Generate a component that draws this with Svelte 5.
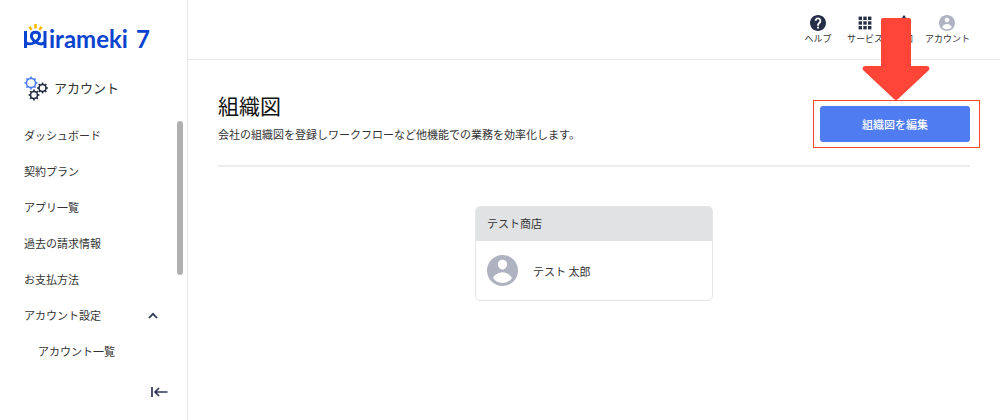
<script>
	const menu = ["ダッシュボード", "契約プラン", "アプリ一覧", "過去の請求情報", "お支払方法"]

	let open = $state(true)

	// teeth around each gear of the section icon
	const gears = [
		{ x: 7, y: 7, r: 4.6, cls: "blue" },
		{ x: 18.5, y: 12, r: 3.5, cls: "navy" },
		{ x: 10, y: 19, r: 3.5, cls: "navy" },
	]
	const angles = [0, 45, 90, 135, 180, 225, 270, 315]
</script>

{#snippet person()}
	<svg viewBox="2 2 20 20" aria-hidden="true">
		<path d="M12 2C6.48 2 2 6.48 2 12s4.48 10 10 10 10-4.48 10-10S17.52 2 12 2zm0 3c1.66 0 3 1.34 3 3s-1.34 3.4-3 3.4S9 9.66 9 8s1.34-3 3-3zm0 15c-2.5 0-4.71-1.1-6-2.98.03-1.99 4-3.88 6-3.88s5.97 1.89 6 3.88C16.71 18.9 14.5 20 12 20z"/>
	</svg>
{/snippet}

<div class="app">
	<aside>
		<a class="logo" href="#top" aria-label="Mirameki 7">
			<svg class="mark" width="25" height="28" viewBox="0 0 25 28" aria-hidden="true">
				<g class="rays">
					<path d="M5.400 4.800L7.600 7.800M11.500 2V6.500M17.600 4.800L15.400 7.800"/>
				</g>
				<g class="strokes">
					<path d="M1.500 9V26M21 9V26"/>
					<path d="M1.500 20.500C4 22.500 8 22 10.500 20.500C14.500 18 16 15.500 15.500 13C14.800 9.400 8.200 9.400 7.500 13C7 15.500 8.500 18 12.500 20.500C15 22 18.500 22.500 21 20.500"/>
				</g>
			</svg>
			<span class="name">irameki</span>
			<span class="seven">7</span>
		</a>

		<div class="section">
			<svg width="25" height="25" viewBox="0 0 25 25" aria-hidden="true">
				{#each gears as g}
					<g class={g.cls} transform="translate({g.x} {g.y})">
						<circle r={g.r}/>
						{#each angles as a}
							<path d="M0 {-g.r}V{-g.r - 1.9}" transform="rotate({a})"/>
						{/each}
					</g>
				{/each}
			</svg>
			<span>アカウント</span>
		</div>

		<div class="scroll">
			<nav>
				{#each menu as item}
					<a href="#menu">{item}</a>
				{/each}
				<button class="group" aria-expanded={open} onclick={() => open = !open}>
					アカウント設定
					<svg class:closed={!open} width="10" height="7" viewBox="0 0 10 7" aria-hidden="true">
						<path d="M1 6L5 1.800L9 6"/>
					</svg>
				</button>
				{#if open}
					<a class="sub" href="#accounts">アカウント一覧</a>
				{/if}
			</nav>
			<div class="thumb"></div>
		</div>

		<button class="collapse" aria-label="メニューを閉じる">
			<svg width="17" height="12" viewBox="0 0 17 12" aria-hidden="true">
				<path d="M1 1V11M16.500 6H4M8 2L4 6L8 10"/>
			</svg>
		</button>
	</aside>

	<div class="page">
		<header>
			<a class="help" href="#help">
				<svg viewBox="2 2 20 20" aria-hidden="true">
					<path d="M12 2C6.480 2 2 6.480 2 12s4.480 10 10 10 10-4.480 10-10S17.520 2 12 2zm1.200 17h-2.400v-2.400h2.400V19zm2.300-7.400l-.9.920C13.700 13.300 13.200 14 13.200 15.300h-2.400v-.6c0-1.100.45-2.100 1.170-2.830l1.240-1.260c.37-.36.59-.86.59-1.410 0-1.100-.8-1.900-1.800-1.900s-1.800.8-1.800 1.900H7.900C7.900 6.800 9.700 5 12 5s4.100 1.800 4.100 4.200c0 .9-.2 1.700-.6 2.400z"/>
				</svg>
				<span>ヘルプ</span>
			</a>
			<a href="#services">
				<svg viewBox="0 0 16 16" aria-hidden="true">
					{#each [1.6, 6.3, 11] as y}
						{#each [1.6, 6.3, 11] as x}
							<rect {x} {y} width="3.400" height="3.400"/>
						{/each}
					{/each}
				</svg>
				<span>サービス</span>
			</a>
			<a href="#notice">
				<svg viewBox="2 2 20 20" aria-hidden="true">
					<path d="M12 22c1.100 0 2-.9 2-2h-4c0 1.100.9 2 2 2zm6-6v-5c0-3.070-1.640-5.640-4.500-6.320V4c0-.83-.67-1.500-1.500-1.500s-1.500.67-1.500 1.500v.68C7.630 5.360 6 7.920 6 11v5l-2 2v1h16v-1l-2-2z"/>
				</svg>
				<span>通知</span>
			</a>
			<a class="me" href="#account">
				{@render person()}
				<span>アカウント</span>
			</a>
		</header>

		<main>
			<div class="head">
				<div>
					<h1>組織図</h1>
					<p>会社の組織図を登録しワークフローなど他機能での業務を効率化します。</p>
				</div>
				<div class="action">
					<button class="edit">組織図を編集</button>
					<div class="frame"></div>
					<svg class="arrow" width="68" height="82" viewBox="0 0 68 82" aria-hidden="true">
						<path d="M21 0H47Q49 0 49 2V48H65Q69 49 66.500 52.500L36 81Q34 83 32 81L1.500 52.500Q-1 49 3 48H19V2Q19 0 21 0Z"/>
					</svg>
				</div>
			</div>

			<section class="card">
				<h2>テスト商店</h2>
				<div class="member">
					{@render person()}
					<span>テスト 太郎</span>
				</div>
			</section>
		</main>
	</div>
</div>

<style>
	:global(body) {
		background: #fff;
		color: #333;
		font-family: "Noto Sans CJK JP", "Noto Sans", sans-serif;
		font-size: 11px;
		line-height: 16px;
	}

	a {
		color: inherit;
		text-decoration: none;
	}

	button {
		border: none;
		background: none;
		padding: 0;
		color: inherit;
		font: inherit;
		cursor: pointer;
	}

	.app {
		display: grid;
		grid-template-columns: 188px 1fr;
		min-height: 100vh;
	}

	aside {
		box-sizing: border-box;
		display: flex;
		flex-direction: column;
		border-right: 1px solid #e8e8ea;
	}

	.logo {
		display: flex;
		align-items: center;
		height: 28px;
		margin: 22px 0 0 24px;
		color: #0a43cf;
		font: bold 24px/28px Lato, sans-serif;
	}

	.mark {
		fill: none;
		stroke-width: 3;
	}

	.rays {
		stroke: #fbb800;
		stroke-width: 2.6;
	}

	.strokes {
		stroke: #0a43cf;
	}

	.name, .seven {
		padding-top: 6px;
	}

	.seven {
		margin-left: 8px;
	}

	.section {
		display: flex;
		align-items: center;
		gap: 5px;
		height: 26px;
		margin: 25px 0 16px 24px;
		font-size: 13px;
	}

	.section svg {
		fill: none;
		stroke-width: 1.6;
	}

	.blue {
		stroke: #4c7cf0;
	}

	.navy {
		stroke: #1f2940;
	}

	.scroll {
		display: flex;
		align-items: flex-start;
	}

	nav {
		flex: 1;
		display: flex;
		flex-direction: column;
	}

	nav a, .group {
		padding: 10px 0 10px 24px;
	}

	.group {
		display: flex;
		align-items: center;
		justify-content: space-between;
		padding-right: 19px;
	}

	.group svg, .collapse svg {
		fill: none;
		stroke: #2b3553;
		stroke-width: 1.7;
	}

	.closed {
		transform: rotate(180deg);
	}

	nav .sub {
		padding-left: 38px;
	}

	.thumb {
		width: 6px;
		height: 154px;
		margin: 4px 4px 0 0;
		border-radius: 3px;
		background: #b0b0b0;
	}

	.collapse {
		align-self: flex-end;
		display: flex;
		margin: 17px 19px 20px 0;
	}

	header {
		display: flex;
		justify-content: flex-end;
		gap: 12px;
		height: 59px;
		padding-right: 30px;
		border-bottom: 1px solid #e8e8ea;
	}

	header a {
		display: flex;
		flex-direction: column;
		align-items: center;
		padding-top: 15px;
		font-size: 9px;
	}

	.help {
		min-width: 34px;
	}

	header svg {
		width: 16px;
		height: 16px;
		fill: #262f4a;
	}

	.me svg, .member svg {
		fill: #afb2c0;
	}

	main {
		padding: 29px 30px 30px;
	}

	.head {
		display: flex;
		align-items: flex-start;
		justify-content: space-between;
		padding-bottom: 23px;
		border-bottom: 2px solid #ececed;
	}

	h1 {
		margin: 0 0 5px;
		color: #111;
		font-size: 21px;
		font-weight: 400;
		line-height: 32px;
	}

	p {
		margin: 0;
	}

	.action {
		position: relative;
		margin-top: 17px;
	}

	.edit {
		display: block;
		width: 150px;
		height: 36px;
		border-radius: 3px;
		background: #4f7cf0;
		color: #fff;
		font-weight: 500;
	}

	.frame {
		position: absolute;
		inset: -6px -10px -6px -7px;
		border: 1px solid #ff4438;
		pointer-events: none;
	}

	.arrow {
		position: absolute;
		right: 40px;
		bottom: 42px;
		fill: #ff4438;
		pointer-events: none;
	}

	.card {
		width: 236px;
		margin: 39px auto 0;
		border: 1px solid #e6e6e8;
		border-radius: 5px;
		overflow: hidden;
	}

	h2 {
		margin: 0;
		padding: 8px 11px 10px;
		background: #e1e2e4;
		font-size: 11px;
		font-weight: 400;
	}

	.member {
		display: flex;
		align-items: center;
		gap: 15px;
		padding: 14px 11px;
	}

	.member svg {
		width: 31px;
		height: 31px;
	}
</style>
